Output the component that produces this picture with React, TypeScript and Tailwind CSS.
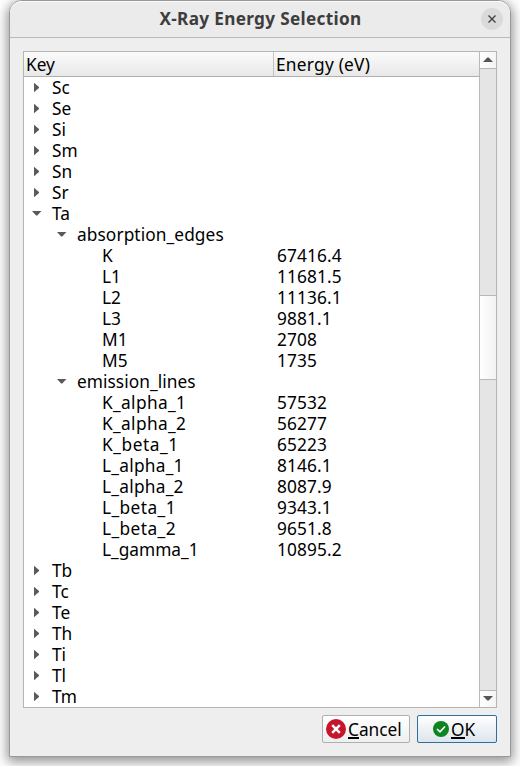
type Row = { label: string; depth: 0 | 1 | 2; open?: boolean; value?: string; track?: string };

const leaf = (label: string, value: string, track = ""): Row => ({ label, value, depth: 2, track });
const element = (label: string): Row => ({ label, depth: 0, open: false });

const rows: Row[] = [
  ...["Sc", "Se", "Si", "Sm", "Sn", "Sr"].map(element),
  { label: "Ta", depth: 0, open: true },
  { label: "absorption_edges", depth: 1, open: true, track: "tracking-[0.09px]" },
  leaf("K", "67416.4"),
  leaf("L1", "11681.5"),
  leaf("L2", "11136.1"),
  leaf("L3", "9881.1"),
  leaf("M1", "2708"),
  leaf("M5", "1735"),
  { label: "emission_lines", depth: 1, open: true, track: "tracking-[0.05px]" },
  leaf("K_alpha_1", "57532", "tracking-[0.35px]"),
  leaf("K_alpha_2", "56277", "tracking-[0.35px]"),
  leaf("K_beta_1", "65223", "tracking-[0.55px]"),
  leaf("L_alpha_1", "8146.1", "tracking-[0.25px]"),
  leaf("L_alpha_2", "8087.9", "tracking-[0.25px]"),
  leaf("L_beta_1", "9343.1", "tracking-[0.42px]"),
  leaf("L_beta_2", "9651.8", "tracking-[0.42px]"),
  leaf("L_gamma_1", "10895.2"),
  ...["Tb", "Tc", "Te", "Th", "Ti", "Tl", "Tm"].map(element),
];

const indent = ["pl-2", "pl-[33px]", "pl-[58px]"];

function Expander({ open }: { open?: boolean }) {
  if (open === undefined) return <span className="w-5 shrink-0" />;
  return (
    <svg className="h-[21px] w-5 shrink-0" viewBox="0 0 20 21" fill="#5a5a5a">
      {open ? <path d="M0 8H9.4L5.3 12.5H4.1Z" /> : <path d="M2 5.8V15.2L7 11V10Z" />}
    </svg>
  );
}

function TreeRow({ row }: { row: Row }) {
  return (
    <div className="flex h-[21px] items-center leading-[21px]">
      <div className={`flex w-[253px] items-center ${indent[row.depth]}`}>
        <Expander open={row.open} />
        <span className={row.track}>{row.label}</span>
      </div>
      {row.value && <span className="tracking-[0.1px]">{row.value}</span>}
    </div>
  );
}

function ScrollBar() {
  return (
    <div className="flex w-[17px] shrink-0 flex-col border-l border-[#b9b9b9] bg-[#e5e5e5]">
      <div className="h-[17px] border-b border-[#b9b9b9] bg-linear-to-r from-white to-[#f4f4f4]">
        <svg className="block h-4 w-4" viewBox="0 0 16 16"><path d="M3 10H13L8.7 5.5H7.3Z" fill="#555" /></svg>
      </div>
      <div className="h-[226px]" />
      <div className="h-[85px] border-y border-[#b9b9b9] bg-linear-to-r from-white to-[#f2f2f2]" />
      <div className="flex-1" />
      <div className="h-[17px] border-t border-[#b9b9b9] bg-linear-to-r from-white to-[#f4f4f4]">
        <svg className="block h-4 w-4" viewBox="0 0 16 16"><path d="M3 5H13L8.7 9.5H7.3Z" fill="#555" /></svg>
      </div>
    </div>
  );
}

function Mnemonic({ children }: { children: string }) {
  return <span className="inline-block h-[22px] border-b-2 border-black leading-[25px]">{children}</span>;
}

export default function App() {
  return (
    <div className="h-[766px] w-[520px] overflow-hidden bg-white pl-[9px] font-['Noto_Sans','Open_Sans',sans-serif] text-[17.3px] text-black">
      <div className="flex h-[757px] w-[502px] flex-col rounded-t-[13px] border border-[#999] bg-[#eee] shadow-[0_3px_12px_2px_rgba(0,0,0,0.42)]">
        <div className="flex h-[37px] shrink-0 items-center rounded-t-xl border-b border-[#b9b9b9] bg-[#ebebeb] shadow-[inset_0_1px_0_#fafafa]">
          <div className="w-[26px]" />
          <h1 className="flex-1 pl-1 text-center text-[17.2px] font-bold tracking-[0.32px] whitespace-nowrap text-[#3d3d3d]">X-Ray Energy Selection</h1>
          <button className="mr-[7px] flex size-[22px] items-center justify-center rounded-full bg-[#dadada]" aria-label="Close">
            <svg className="size-2" viewBox="0 0 8 8" stroke="#3d3d3d" strokeWidth="1.3"><path d="M.5 .5L7.5 7.5M7.5 .5L.5 7.5" /></svg>
          </button>
        </div>
        <div className="mx-[13px] mt-[13px] flex h-[657px] shrink-0 border border-[#b5b5b5] bg-white">
          <div className="min-w-0 flex-1">
            <div className="flex h-[25px] border-b border-[#b0b0b0] bg-linear-to-b from-[#fbfbfb] to-[#e8e8e8] leading-[25px]">
              <div className="w-[250px] border-r border-[#c3c3c3] pl-0.5">Key</div>
              <div className="pl-0.5 tracking-[0.25px]">Energy (eV)</div>
            </div>
            {rows.map((row) => <TreeRow key={row.label} row={row} />)}
          </div>
          <ScrollBar />
        </div>
        <div className="mt-[7px] mr-[13px] flex justify-end gap-[7px]">
          <button className="flex h-7 w-[88px] items-center rounded-[2px] border border-[#b0b0b0] bg-linear-to-b from-white to-[#efefef] pl-[3px]">
            <svg className="mr-0.5 size-5 shrink-0" viewBox="0 0 20 20"><circle cx="10" cy="10" r="10" fill="#c7162b" /><path d="M6.2 6.2L13.8 13.8M13.8 6.2L6.2 13.8" stroke="white" strokeWidth="2.5" /></svg>
            <span className="flex h-[25px] leading-[25px]"><Mnemonic>C</Mnemonic>ancel</span>
          </button>
          <button className="flex h-7 w-20 items-center rounded-[2px] border border-[#2d6f9f] bg-linear-to-b from-white to-[#dce5ed] pl-[15px]">
            <svg className="mr-0.5 size-4 shrink-0" viewBox="0 0 16 16"><circle cx="8" cy="8" r="8" fill="#0e8420" /><path d="M4 8L7 10.8L12 5.5" fill="none" stroke="white" strokeWidth="1.6" /></svg>
            <span className="flex h-[25px] leading-[25px]"><Mnemonic>O</Mnemonic>K</span>
          </button>
        </div>
      </div>
    </div>
  );
}
